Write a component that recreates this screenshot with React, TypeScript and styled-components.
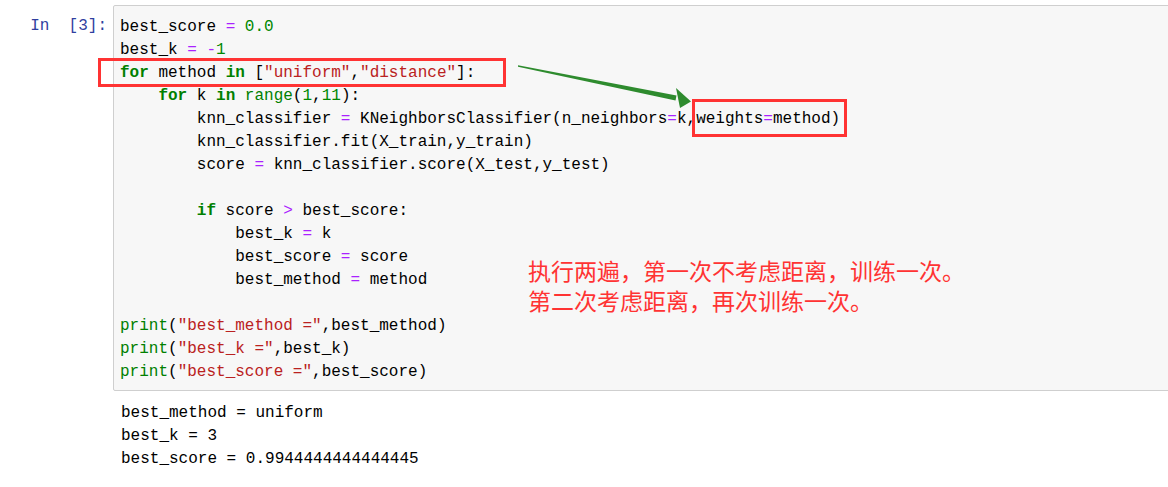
import React from "react";
import styled, { createGlobalStyle } from "styled-components";

const Global = createGlobalStyle`
  html, body { margin: 0; padding: 0; background: #ffffff; }
  body { overflow: hidden; }
`;

const Page = styled.div`
  position: relative;
  width: 1168px;
  height: 487px;
  overflow: hidden;
  padding-top: 5px;
  box-sizing: border-box;
  font-family: "Liberation Mono", "DejaVu Sans Mono", monospace;
  font-size: 16px;
  line-height: 23px;
  color: #000;
`;

const Row = styled.div`
  display: flex;
  align-items: flex-start;
`;

const Prompt = styled.div`
  flex: 0 0 113px;
  box-sizing: border-box;
  padding: 10px 6px 0 0;
  text-align: right;
  white-space: pre;
  color: #303f9f;
`;

const InputArea = styled.div`
  flex: 1;
  margin-right: -10px;
  background: #f7f7f7;
  border: 1px solid #cfcfcf;
  border-radius: 2px;
  padding: 10px 6px 6px 6px;
`;

const OutputArea = styled.div`
  flex: 1;
  padding: 11px 7px 0 8px;
`;

const Line = styled.div`
  white-space: pre;
  height: 23px;
`;

const Kw = styled.span`
  color: #008000;
  font-weight: bold;
`;
const Bi = styled.span`
  color: #008000;
`;
const Op = styled.span`
  color: #aa22ff;
`;
const Num = styled.span`
  color: #008800;
`;
const Str = styled.span`
  color: #ba2121;
`;

const Mark = styled.div<{ $l: number; $t: number; $w: number; $h: number }>`
  position: absolute;
  left: ${(p) => p.$l}px;
  top: ${(p) => p.$t}px;
  width: ${(p) => p.$w}px;
  height: ${(p) => p.$h}px;
  box-sizing: border-box;
  border: 3px solid #ff3333;
  pointer-events: none;
`;

const ArrowSvg = styled.svg`
  position: absolute;
  left: 0;
  top: 0;
  width: 1168px;
  height: 487px;
  pointer-events: none;
`;

const Note = styled.div`
  position: absolute;
  left: 528px;
  top: 255px;
  font-family: "Noto Sans CJK SC", "Noto Sans", sans-serif;
  font-size: 23px;
  line-height: 30px;
  color: #ff3333;
  white-space: pre;
`;

export default function App() {
  return (
    <Page>
      <Global />
      <Row>
        <Prompt>{"In  [3]:"}</Prompt>
        <InputArea>
          <Line>
            best_score <Op>=</Op> <Num>0.0</Num>
          </Line>
          <Line>
            best_k <Op>=</Op> <Op>-</Op><Num>1</Num>
          </Line>
          <Line>
            <Kw>for</Kw> method <Kw>in</Kw> [<Str>"uniform"</Str>,<Str>"distance"</Str>]:
          </Line>
          <Line>
            {"    "}<Kw>for</Kw> k <Kw>in</Kw> <Bi>range</Bi>(<Num>1</Num>,<Num>11</Num>):
          </Line>
          <Line>
            {"        "}knn_classifier <Op>=</Op> KNeighborsClassifier(n_neighbors<Op>=</Op>k,weights<Op>=</Op>method)
          </Line>
          <Line>{"        "}knn_classifier.fit(X_train,y_train)</Line>
          <Line>
            {"        "}score <Op>=</Op> knn_classifier.score(X_test,y_test)
          </Line>
          <Line />
          <Line>
            {"        "}<Kw>if</Kw> score <Op>&gt;</Op> best_score:
          </Line>
          <Line>
            {"            "}best_k <Op>=</Op> k
          </Line>
          <Line>
            {"            "}best_score <Op>=</Op> score
          </Line>
          <Line>
            {"            "}best_method <Op>=</Op> method
          </Line>
          <Line />
          <Line>
            <Bi>print</Bi>(<Str>"best_method ="</Str>,best_method)
          </Line>
          <Line>
            <Bi>print</Bi>(<Str>"best_k ="</Str>,best_k)
          </Line>
          <Line>
            <Bi>print</Bi>(<Str>"best_score ="</Str>,best_score)
          </Line>
        </InputArea>
      </Row>
      <Row>
        <Prompt />
        <OutputArea>
          <Line>best_method = uniform</Line>
          <Line>best_k = 3</Line>
          <Line>best_score = 0.9944444444444445</Line>
        </OutputArea>
      </Row>

      <Mark $l={98} $t={58} $w={408} $h={29} />
      <Mark $l={692} $t={99} $w={155} $h={38} />
      <ArrowSvg viewBox="0 0 1168 487">
        <polygon
          points="518,65.2 518,66.8 675.5,100.5 676.5,95.5"
          fill="#2e8b2e"
        />
        <polygon points="691,101.5 676,88 680,108" fill="#2e8b2e" />
      </ArrowSvg>
      <Note>
        {"执行两遍，第一次不考虑距离，训练一次。\n第二次考虑距离，再次训练一次。"}
      </Note>
    </Page>
  );
}
